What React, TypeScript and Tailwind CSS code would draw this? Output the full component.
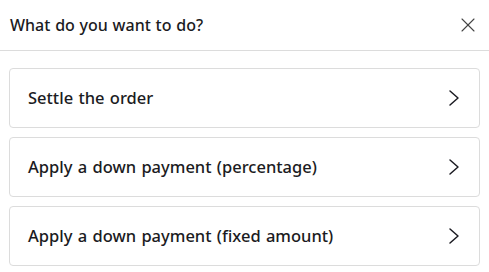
import { X } from 'lucide-react';

const options = [
  'Settle the order',
  'Apply a down payment (percentage)',
  'Apply a down payment (fixed amount)',
];

function Chevron() {
  return (
    <svg width="12" height="18" viewBox="0 0 12 18" fill="none" className="text-[#1b1b22]">
      <path d="M2 2l8 7-8 7" stroke="currentColor" strokeWidth="1.5" strokeLinecap="round" strokeLinejoin="round" />
    </svg>
  );
}

export default function App() {
  return (
    <div
      className="w-[489px] h-[272px] bg-white text-[#1b1b22] overflow-hidden"
      style={{ fontFamily: '"Noto Sans", "Open Sans", sans-serif' }}
    >
      {/* Header */}
      <div className="h-[51px] flex items-center justify-between pl-[10px] pr-[9px] border-b border-[#dcdcdc]">
        <h2 className="text-[16px] font-medium [word-spacing:0.6px]">What do you want to do?</h2>
        <button className="text-[#444]">
          <X size={24} strokeWidth={1.1} />
        </button>
      </div>

      {/* Options */}
      <div className="flex flex-col gap-[9px] px-[9px] pt-[17px]">
        {options.map((label) => (
          <button
            key={label}
            className="h-[60px] w-full flex items-center justify-between pl-[18px] pr-[19px] border border-[#dcdcdc] rounded-[4px] text-left"
          >
            <span className="text-[16.5px] font-medium [word-spacing:1px]">{label}</span>
            <Chevron />
          </button>
        ))}
      </div>
    </div>
  );
}
